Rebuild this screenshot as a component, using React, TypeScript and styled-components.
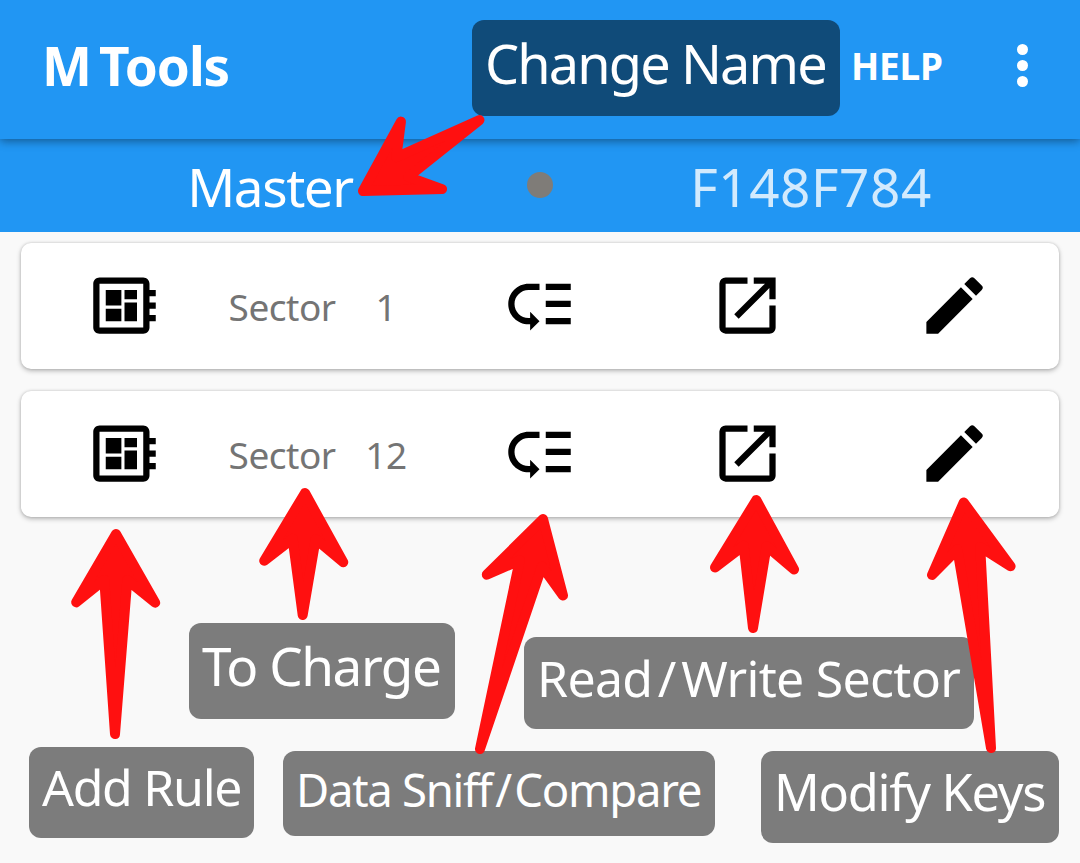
import React from 'react';
import styled, { createGlobalStyle } from 'styled-components';
import { MdDeveloperBoard, MdEdit, MdLowPriority, MdOpenInNew } from 'react-icons/md';

const GlobalStyle = createGlobalStyle`
  * { box-sizing: border-box; }
  body {
    margin: 0;
    background: #f9f9f9;
    font-family: 'Noto Sans', 'Open Sans', sans-serif;
    font-weight: 400;
  }
`;

const Screen = styled.div`
  position: relative;
  width: 1080px;
  height: 863px;
  overflow: hidden;
  background: #f9f9f9;
`;

const AppBar = styled.header`
  position: relative;
  display: flex;
  align-items: center;
  height: 139px;
  padding: 0 52px 8px 42px;
  background: #2196f3;
  color: #fff;
  box-shadow: 0 2px 9px rgba(0, 0, 0, 0.42);
`;

const Title = styled.h1`
  margin: 0;
  padding-top: 1px;
  font-size: 53px;
  line-height: 72px;
  font-weight: 700;
  letter-spacing: -1.1px;
  word-spacing: -4.5px;
  white-space: nowrap;
`;

const HelpButton = styled.button`
  margin: 0 0 0 auto;
  padding: 0;
  border: 0;
  background: none;
  color: inherit;
  font: 700 37px/50px 'Noto Sans', sans-serif;
  letter-spacing: -0.3px;
`;

const MenuButton = styled.button`
  display: flex;
  flex-direction: column;
  gap: 4.6px;
  margin: 0 0 0 74px;
  padding: 0;
  border: 0;
  background: none;
`;

const MenuDot = styled.span`
  width: 11.4px;
  height: 11.4px;
  border-radius: 50%;
  background: #fff;
`;

const DeviceBar = styled.section`
  display: grid;
  grid-template-columns: 540px 540px;
  height: 93px;
  background: #2196f3;
`;

const DeviceText = styled.div<{ $dim?: boolean; $spacing: number }>`
  padding: 12px 0 0 ${(p) => (p.$dim ? 2 : 0)}px;
  text-align: center;
  font-size: 53px;
  line-height: 72px;
  letter-spacing: ${(p) => p.$spacing}px;
  color: ${(p) => (p.$dim ? 'rgba(255, 255, 255, 0.8)' : '#fff')};
`;

const StatusDot = styled.span`
  position: absolute;
  left: 527px;
  top: 172px;
  width: 26px;
  height: 26px;
  border-radius: 50%;
  background: #7f7c78;
`;

const SectorList = styled.main`
  display: flex;
  flex-direction: column;
  gap: 22px;
  padding: 11px 21px;
`;

const SectorCard = styled.article`
  display: grid;
  grid-template-columns: repeat(5, 1fr);
  align-items: center;
  height: 126px;
  border-radius: 10px;
  background: #fff;
  box-shadow: 0 2px 5px rgba(0, 0, 0, 0.26), 0 0 3px rgba(0, 0, 0, 0.16);
`;

const IconCell = styled.div`
  display: flex;
  justify-content: center;
  padding: 0 1px 1px 0;
  color: #000;
`;

const SectorLabel = styled.div`
  display: flex;
  font-size: 37px;
  line-height: 50px;
  padding-top: 1px;
  color: #747474;
`;

const SectorName = styled.span`
  width: 107px;
  letter-spacing: -0.5px;
`;

const SectorNumber = styled.span`
  flex: 1;
  text-align: center;
  letter-spacing: -0.6px;
`;

interface CalloutBox {
  x: number;
  y: number;
  w: number;
  h: number;
  pad: number;
  top: number;
  size: number;
  spacing: number;
  slashGap?: number;
}

const Callout = styled.div<{ $box: CalloutBox }>`
  position: absolute;
  left: ${(p) => p.$box.x}px;
  top: ${(p) => p.$box.y}px;
  width: ${(p) => p.$box.w}px;
  height: ${(p) => p.$box.h}px;
  padding: ${(p) => p.$box.top}px 0 0 ${(p) => p.$box.pad}px;
  border-radius: 12px;
  background: rgba(0, 0, 0, 0.5);
  color: #fff;
  font-size: ${(p) => p.$box.size}px;
  line-height: 72px;
  letter-spacing: ${(p) => p.$box.spacing}px;
  white-space: nowrap;
`;

const Slash = styled.span<{ $gap: number }>`
  margin: 0 ${(p) => p.$gap}px;
`;

const ArrowLayer = styled.svg`
  position: absolute;
  inset: 0;
  fill: #ff1010;
  stroke: #ff1010;
  stroke-width: 10;
  stroke-linejoin: round;
`;

const callouts: (CalloutBox & { text: string })[] = [
  { text: 'Change Name', x: 472, y: 20, w: 368, h: 96, pad: 13, top: 7, size: 54, spacing: -1.85 },
  { text: 'To Charge', x: 189, y: 623, w: 266, h: 96, pad: 13, top: 7, size: 53, spacing: -1.45 },
  { text: 'Add Rule', x: 29, y: 746.5, w: 225, h: 91, pad: 13, top: 4.5, size: 50, spacing: -1.3 },
  { text: 'Data Sniff/Compare', x: 283, y: 750.5, w: 432, h: 85.5, pad: 13, top: 2, size: 45.5, spacing: -1.3, slashGap: 3.5 },
  { text: 'Read/Write Sector', x: 524, y: 636.5, w: 450, h: 92.5, pad: 13, top: 5, size: 50, spacing: -0.7, slashGap: 5.5 },
  { text: 'Modify Keys', x: 761, y: 750.5, w: 298, h: 92.5, pad: 13, top: 5.5, size: 50.5, spacing: -1.3 },
];

type Point = [number, number];

const arrows: { tip: Point; tail: Point }[] = [
  { tip: [363, 191], tail: [479.5, 120] },
  { tip: [116, 534], tail: [115, 734] },
  { tip: [305, 493], tail: [302.7, 615] },
  { tip: [543, 519], tail: [480, 749] },
  { tip: [756.3, 500], tail: [753, 628] },
  { tip: [963.7, 502.5], tail: [991, 748] },
];

// Builds the arrow outline from its axis: tip, wing, notch, tail, notch, wing.
function arrowPoints(tip: Point, tail: Point) {
  const dx = tail[0] - tip[0];
  const dy = tail[1] - tip[1];
  const length = Math.hypot(dx, dy);
  const ux = dx / length;
  const uy = dy / length;
  const outline: Point[] = [[0, 0], [68.5, 39.5], [46, 11.5], [length, 0], [46, -11.5], [68.5, -39.5]];
  return outline
    .map(([along, side]) => `${tip[0] + ux * along - uy * side},${tip[1] + uy * along + ux * side}`)
    .join(' ');
}

function CalloutText({ text, gap }: { text: string; gap: number }) {
  const [before, after] = text.split('/');
  return after ? <>{before}<Slash $gap={gap}>/</Slash>{after}</> : <>{before}</>;
}

function SectorRow({ number }: { number: number }) {
  return (
    <SectorCard>
      <IconCell><MdDeveloperBoard size={75} /></IconCell>
      <SectorLabel>
        <SectorName>Sector</SectorName>
        <SectorNumber>{number}</SectorNumber>
      </SectorLabel>
      <IconCell><MdLowPriority size={75} /></IconCell>
      <IconCell><MdOpenInNew size={75} /></IconCell>
      <IconCell><MdEdit size={75} /></IconCell>
    </SectorCard>
  );
}

export default function App() {
  return (
    <Screen>
      <GlobalStyle />
      <AppBar>
        <Title>M Tools</Title>
        <HelpButton>HELP</HelpButton>
        <MenuButton aria-label="More options">
          <MenuDot />
          <MenuDot />
          <MenuDot />
        </MenuButton>
      </AppBar>
      <DeviceBar>
        <DeviceText $spacing={-1.4}>Master</DeviceText>
        <DeviceText $dim $spacing={0.6}>F148F784</DeviceText>
        <StatusDot />
      </DeviceBar>
      <SectorList>
        <SectorRow number={1} />
        <SectorRow number={12} />
      </SectorList>
      {callouts.map(({ text, ...box }) => (
        <Callout key={text} $box={box}>
          <CalloutText text={text} gap={box.slashGap ?? 0} />
        </Callout>
      ))}
      <ArrowLayer width="1080" height="863" viewBox="0 0 1080 863">
        {arrows.map(({ tip, tail }) => (
          <polygon key={tip.join()} points={arrowPoints(tip, tail)} />
        ))}
      </ArrowLayer>
    </Screen>
  );
}
